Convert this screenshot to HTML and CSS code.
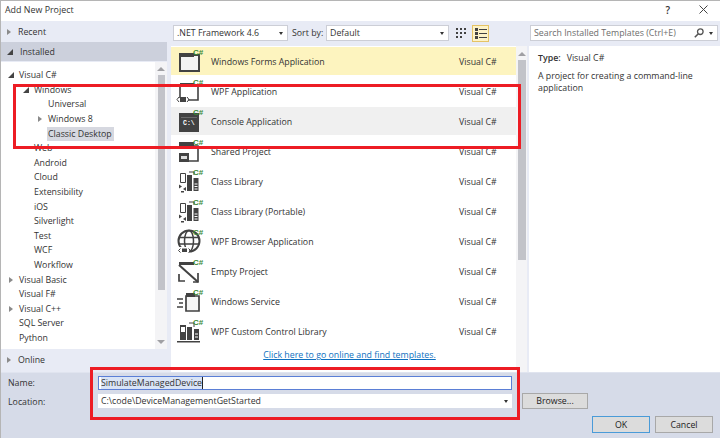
FILE: index.html
```html
<!DOCTYPE html>
<html lang="en">
<head>
    <meta charset="UTF-8">
    <title>Add New Project</title>
    <link rel="stylesheet" href="styles.css">
</head>
<body>
    <svg class="defs" width="0" height="0">
        <symbol id="i-forms" viewBox="0 0 28 24">
            <path d="M4 6h19v16H4z" fill="#f3f3f3" stroke="#424242" stroke-width="2"/>
            <path d="M3 4h15v4H3z" fill="#424242"/>
        </symbol>
        <symbol id="i-wpf" viewBox="0 0 28 24">
            <path d="M4 19V6h18v15H12" fill="none" stroke="#424242" stroke-width="1.6"/>
            <path d="M4 4h14v3H4z" fill="#424242"/>
            <path d="M4 18h6v5H4z" fill="#424242"/>
            <path d="M3 18l-2 2.500 2 2.500M11 18l2 2.500-2 2.500" fill="none" stroke="#424242"/>
        </symbol>
        <symbol id="i-console" viewBox="0 0 28 24">
            <path d="M3 4h20v19H3z" fill="#424242"/>
            <path d="M5 8h16v1H5z" fill="#6a6a6a"/>
        </symbol>
        <symbol id="i-shared" viewBox="0 0 28 24">
            <path d="M9 7h13v15H9" fill="#fff" stroke="#424242" stroke-width="1.600"/>
            <path d="M3 3h15v4H3z" fill="#424242"/>
            <path d="M3 14h10v9H3z" fill="#424242"/>
            <path d="M5 17h6v3H5z" fill="#ddd"/>
        </symbol>
        <symbol id="i-lib" viewBox="0 0 28 24">
            <path d="M4.500 4.500h5v9h-5z" fill="#fff" stroke="#424242"/>
            <path d="M11 6h5v16h-5z" fill="#424242"/>
            <path d="M17.500 9h5v13h-5z" fill="#424242"/>
            <path d="M18.500 15h3M18.500 17.500h3M18.500 20h3" stroke="#fff"/>
            <path d="M13 3h5v3" fill="none" stroke="#424242"/>
            <path d="M3 17h8v5H3z" fill="#fff"/>
            <path d="M3 15.500l3 2-3 2zM10 18l-3 2 3 2zM5 22h3v1.500H5z" fill="#424242"/>
        </symbol>
        <symbol id="i-globe" viewBox="0 0 28 24">
            <circle cx="13" cy="12" r="10.500" fill="none" stroke="#424242" stroke-width="2"/>
            <ellipse cx="13" cy="12" rx="4.500" ry="10.500" fill="none" stroke="#424242" stroke-width="1.500"/>
            <path d="M3 8.500h20M3 15h20" stroke="#424242" stroke-width="1.500"/>
            <path d="M3 18h10v6H3z" fill="#fff"/>
            <path d="M6 19.500h5v3.500H6z" fill="#424242"/>
            <path d="M4.500 19.500l-2 2 2 2M12.500 19.500l2 2-2 2" fill="none" stroke="#424242"/>
        </symbol>
        <symbol id="i-empty" viewBox="0 0 28 24">
            <path d="M3 3h15v3H3z" fill="#424242"/>
            <path d="M3 6l19 17" stroke="#424242" stroke-width="2"/>
            <path d="M3 15v7h6M22 14v9h-5" fill="none" stroke="#424242" stroke-width="1.700"/>
        </symbol>
        <symbol id="i-service" viewBox="0 0 28 24">
            <path d="M10 7h13v15H10z" fill="#f6f6f6" stroke="#424242" stroke-width="1.700"/>
            <path d="M10 4h9v4h-9z" fill="#424242"/>
            <path d="M1 10h6M3 14h4M1 18h6" stroke="#424242" stroke-width="1.300"/>
        </symbol>
        <symbol id="i-custom" viewBox="0 0 28 24">
            <path d="M4 6h6v15H4z" fill="#424242"/>
            <path d="M11 8h5v13h-5zM18 10h5v11h-5z" fill="#424242"/>
            <path d="M13 4h5v4" fill="none" stroke="#424242"/>
            <path d="M5 8h4v5H5z" fill="#fff"/>
            <path d="M1 22h23v1.500H1z" fill="#424242"/>
            <path d="M19 15h3M19 18h3" stroke="#fff"/>
        </symbol>
    </svg>

    <div class="dialog">
        <div class="titlebar">
            <span>Add New Project</span>
            <div class="title-btns">
                <span class="help">?</span>
                <svg width="9" height="9" viewBox="0 0 9 9"><path d="M.5.500l8 8M8.500.500l-8 8" stroke="#444" fill="none"/></svg>
            </div>
        </div>

        <div class="main">
            <div class="side">
                <div class="side-head recent"><i class="arrow open"></i>Recent</div>
                <div class="side-head installed"><i class="arrow down"></i>Installed</div>
                <div class="tree-wrap">
                    <ul class="tree">
                        <li class="lvl1"><i class="arrow down"></i>Visual C#</li>
                        <li class="lvl2"><i class="arrow down"></i>Windows</li>
                        <li class="lvl3">Universal</li>
                        <li class="lvl3"><i class="arrow open"></i>Windows 8</li>
                        <li class="lvl3"><span class="picked">Classic Desktop</span></li>
                        <li class="lvl2">Web</li>
                        <li class="lvl2">Android</li>
                        <li class="lvl2">Cloud</li>
                        <li class="lvl2">Extensibility</li>
                        <li class="lvl2">iOS</li>
                        <li class="lvl2">Silverlight</li>
                        <li class="lvl2">Test</li>
                        <li class="lvl2">WCF</li>
                        <li class="lvl2">Workflow</li>
                        <li class="lvl1"><i class="arrow open"></i>Visual Basic</li>
                        <li class="lvl1">Visual F#</li>
                        <li class="lvl1"><i class="arrow open"></i>Visual C++</li>
                        <li class="lvl1">SQL Server</li>
                        <li class="lvl1">Python</li>
                    </ul>
                    <div class="scroll tree-scroll">
                        <i class="up"></i><b></b><i class="dn"></i>
                    </div>
                </div>
                <div class="side-head online"><i class="arrow open"></i>Online</div>
            </div>

            <div class="center">
                <div class="toolbar">
                    <div class="combo fw">.NET Framework 4.6<i class="caret"></i></div>
                    <span class="sort-label">Sort by:</span>
                    <div class="combo sort">Default<i class="caret"></i></div>
                    <svg class="grid-icon" width="11" height="11" viewBox="0 0 11 11"><path d="M0 0h2v2H0zM4 0h2v2H4zM8 0h2v2H8zM0 4h2v2H0zM4 4h2v2H4zM8 4h2v2H8zM0 8h2v2H0zM4 8h2v2H4z" fill="#424242"/></svg>
                    <div class="list-btn">
                        <svg width="12" height="11" viewBox="0 0 12 11"><path d="M0 0h3v3H0zM0 4h3v3H0zM0 8h3v3H0zM4 1h8v1H4zM4 5h8v1H4zM4 9h8v1H4z" fill="#424242"/></svg>
                    </div>
                    <div class="search">
                        <span>Search Installed Templates (Ctrl+E)</span>
                        <svg width="10" height="10" viewBox="0 0 10 10"><circle cx="6.300" cy="3.700" r="2.800" fill="none" stroke="#555" stroke-width="1.300"/><path d="M4.300 5.700L.8 9.200" stroke="#555" stroke-width="1.600"/></svg>
                        <i class="caret"></i>
                    </div>
                </div>
                <div class="content">
                    <div class="list-col">
                        <div class="list">
                            <div class="row hot"><span class="ico"><svg><use href="#i-forms"/></svg><em>C#</em></span><span class="name">Windows Forms Application</span><span class="lang">Visual C#</span></div>
                            <div class="row"><span class="ico"><svg><use href="#i-wpf"/></svg><em>C#</em></span><span class="name">WPF Application</span><span class="lang">Visual C#</span></div>
                            <div class="row sel"><span class="ico"><svg><use href="#i-console"/></svg><em>C#</em><span class="prompt">C:\</span></span><span class="name">Console Application</span><span class="lang">Visual C#</span></div>
                            <div class="row"><span class="ico"><svg><use href="#i-shared"/></svg><em>C#</em></span><span class="name">Shared Project</span><span class="lang">Visual C#</span></div>
                            <div class="row"><span class="ico"><svg><use href="#i-lib"/></svg><em>C#</em></span><span class="name">Class Library</span><span class="lang">Visual C#</span></div>
                            <div class="row"><span class="ico"><svg><use href="#i-lib"/></svg><em>C#</em></span><span class="name">Class Library (Portable)</span><span class="lang">Visual C#</span></div>
                            <div class="row"><span class="ico"><svg><use href="#i-globe"/></svg><em>C#</em></span><span class="name">WPF Browser Application</span><span class="lang">Visual C#</span></div>
                            <div class="row"><span class="ico"><svg><use href="#i-empty"/></svg><em>C#</em></span><span class="name">Empty Project</span><span class="lang">Visual C#</span></div>
                            <div class="row"><span class="ico"><svg><use href="#i-service"/></svg><em>C#</em></span><span class="name">Windows Service</span><span class="lang">Visual C#</span></div>
                            <div class="row"><span class="ico"><svg><use href="#i-custom"/></svg><em>C#</em></span><span class="name">WPF Custom Control Library</span><span class="lang">Visual C#</span></div>
                        </div>
                        <div class="scroll list-scroll">
                            <i class="up"></i><b></b>
                        </div>
                        <div class="online-link"><a href="#">Click here to go online and find templates.</a></div>
                    </div>
                    <div class="info">
                        <p class="type"><strong>Type:</strong>Visual C#</p>
                        <p>A project for creating a command-line application</p>
                    </div>
                </div>
            </div>
        </div>

        <div class="bottom">
            <div class="field">
                <label>Name:</label>
                <div class="name-input"><span>SimulateManagedDevice</span></div>
            </div>
            <div class="field loc">
                <label>Location:</label>
                <div class="loc-input">C:\code\DeviceManagementGetStarted<i class="caret"></i></div>
                <button class="browse">Browse...</button>
            </div>
            <div class="actions">
                <button class="ok">OK</button>
                <button>Cancel</button>
            </div>
        </div>

        <div class="mark mark-top"></div>
        <div class="mark mark-bottom"></div>
    </div>
</body>
</html>
```

FILE: styles.css
```css
* {
    box-sizing: border-box;
}
body {
    margin: 0;
    background: #fff;
    font-family: "Open Sans", "Noto Sans", sans-serif;
    font-size: 8.8px;
    color: #333;
}
.defs {
    display: block;
    height: 0;
}
.dialog {
    position: relative;
    width: 720px;
    height: 438px;
    border-top: 1px solid #b5b5b5;
    border-left: 1px solid #b5b5b5;
    display: flex;
    flex-direction: column;
    overflow: hidden;
}
.titlebar {
    height: 20px;
    flex: none;
    display: flex;
    justify-content: space-between;
    align-items: center;
    padding: 0 0 3px 4px;
    font-size: 8.9px;
}
.title-btns {
    display: flex;
    align-items: center;
    gap: 29px;
    padding-right: 12px;
}
.help {
    font-weight: 600;
    font-size: 10px;
}

.main {
    height: 351px;
    flex: none;
    display: flex;
    background: #e8ebf5;
}
.side {
    width: 170px;
    flex: none;
    display: flex;
    flex-direction: column;
}
.side-head {
    display: flex;
    align-items: center;
    padding-left: 6px;
    gap: 7px;
}
.side-head .arrow {
    width: 3px;
}
.recent {
    height: 21px;
}
.installed {
    height: 19px;
    width: 166px;
    background: #ccd0dc;
}
.online {
    height: 23px;
    margin-top: auto;
    padding-bottom: 2px;
}

.tree-wrap {
    display: flex;
    width: 166px;
    height: 287px;
    margin-top: 1px;
    background: #fff;
}
.tree {
    list-style: none;
    margin: 0;
    padding: 6.2px 0 0;
    width: 154px;
    flex: none;
}
.tree li {
    height: 14.6px;
    line-height: 14.6px;
    position: relative;
    white-space: nowrap;
}
.lvl1 {
    padding-left: 18px;
}
.lvl2 {
    padding-left: 33px;
}
.lvl3 {
    padding-left: 47px;
}
.tree .arrow {
    position: absolute;
    margin-left: -10px;
    top: 4px;
}
.picked {
    display: inline-block;
    background: #d6d8e0;
    margin-left: -1px;
    padding: 0 2px 0 1px;
}
.arrow {
    display: inline-block;
    width: 0;
    height: 0;
}
.arrow.open {
    border-left: 4px solid #8a8a8a;
    border-top: 3.500px solid transparent;
    border-bottom: 3.500px solid transparent;
}
.arrow.down {
    border-right: 6px solid #444;
    border-top: 6px solid transparent;
}
.tree .arrow.down {
    margin-left: -11px;
}

.scroll {
    flex: none;
    background: #f4f4f6;
    display: flex;
    flex-direction: column;
    align-items: center;
}
.scroll b {
    display: block;
    width: 7px;
    background: #c2c3c9;
}
.scroll .up,
.scroll .dn {
    display: block;
    width: 0;
    height: 0;
    border-left: 4px solid transparent;
    border-right: 4px solid transparent;
}
.scroll .up {
    border-bottom: 4px solid #a0a0a4;
}
.scroll .dn {
    border-top: 4px solid #a0a0a4;
    margin-top: auto;
    margin-bottom: 5px;
}
.tree-scroll {
    width: 12px;
    padding-top: 5px;
}
.tree-scroll b {
    height: 215px;
    margin-top: 4px;
}

.center {
    flex: 1;
    min-width: 0;
    display: flex;
    flex-direction: column;
}
.toolbar {
    height: 25px;
    flex: none;
    display: flex;
    align-items: center;
    padding: 0 2px 1px 2px;
}
.combo {
    height: 16px;
    line-height: 14px;
    background: #fff;
    border: 1px solid #ccced6;
    padding-left: 3px;
    position: relative;
}
.fw {
    width: 115px;
}
.sort {
    width: 123px;
}
.sort-label {
    margin: 0 4px;
    width: 30px;
    white-space: nowrap;
}
.caret {
    position: absolute;
    right: 4px;
    top: 6px;
    width: 0;
    height: 0;
    border-left: 2.500px solid transparent;
    border-right: 2.500px solid transparent;
    border-top: 3px solid #333;
}
.grid-icon {
    margin-left: 7px;
}
.list-btn {
    width: 17px;
    height: 17px;
    margin-left: 5px;
    background: #fdf3c8;
    border: 1px solid #e5c365;
    display: flex;
    align-items: center;
    justify-content: center;
}
.search {
    width: 188px;
    height: 16px;
    margin-left: 41px;
    background: #fff;
    border: 1px solid #ccced6;
    position: relative;
    display: flex;
    align-items: center;
    justify-content: space-between;
    padding: 0 13px 0 3px;
    color: #6d6d6d;
}

.content {
    flex: 1;
    display: flex;
    min-height: 0;
}
.list-col {
    width: 356px;
    flex: none;
    display: grid;
    grid-template-columns: 345px 11px;
    grid-template-rows: 1fr 23px;
    background: #fff;
    margin-right: 2px;
}
.list {
    padding-top: 1px;
    overflow: hidden;
    background: #fff;
}
.row {
    height: 28px;
    margin-bottom: 2px;
    display: flex;
    align-items: center;
    padding-top: 0;
}
.row.hot {
    background: #fdf4bf;
}
.row.sel {
    background: #f0f0f0;
}
.ico {
    width: 28px;
    height: 28px;
    margin-left: 5px;
    flex: none;
    position: relative;
}
.ico svg {
    position: absolute;
    left: 0;
    top: 2px;
    width: 28px;
    height: 24px;
}
.ico em {
    position: absolute;
    left: 16px;
    top: 1px;
    font-family: "Liberation Sans", sans-serif;
    font-style: normal;
    font-weight: bold;
    font-size: 8px;
    line-height: 9px;
    color: #388a34;
    padding: 0 1px;
}
.prompt {
    position: absolute;
    left: 7px;
    top: 12px;
    font-family: "Liberation Mono", monospace;
    font-size: 6.500px;
    line-height: 9px;
    font-weight: bold;
    color: #fff;
}
.name,
.lang {
    padding-top: 2px;
}
.name {
    margin-left: 7px;
    width: 248px;
    flex: none;
}
.list-scroll {
    padding-top: 6px;
    grid-row: 1 / 3;
    grid-column: 2;
    background: #f4f4f6;
}
.list-scroll b {
    height: 200px;
    margin-top: 4px;
    width: 8px;
}
.online-link {
    grid-column: 1;
    grid-row: 2;
    text-align: center;
    padding: 0 0 0 12px;
}
.online-link a {
    color: #0e70c0;
}
.info {
    flex: 1;
    background: #fff;
    padding: 6px 9px;
    line-height: 12px;
}
.info p {
    margin: 0 0 6px;
    width: 165px;
}
.type strong {
    font-weight: 600;
    margin-right: 6px;
}

.bottom {
    flex: 1;
    background: #d6dbe8;
    border-top: 1px solid #e0e4ef;
    padding: 3px 7px 0 7px;
    display: flex;
    flex-direction: column;
}
.field {
    display: flex;
    align-items: center;
    height: 14px;
}
.field.loc {
    height: 16px;
    margin-top: 3px;
}
.field.loc label {
    padding-top: 2px;
}
.field label {
    width: 90px;
    flex: none;
}
.name-input {
    width: 414px;
    height: 14px;
    line-height: 12px;
    background: #fff;
    border: 1px solid #5b7fd6;
    padding-left: 2px;
}
.name-input span {
    background: #d9e4f6;
    border-right: 1px solid #222;
}
.loc-input {
    width: 414px;
    height: 14px;
    line-height: 14px;
    background: #fff;
    padding-left: 3px;
    position: relative;
}
button {
    font: inherit;
    color: #222;
    background: #dcdcdc;
    border: 1px solid #a8a8a8;
    padding: 0;
    height: 17px;
    width: 58px;
}
.browse {
    width: 66px;
    height: 16px;
    margin-left: 10px;
}
.actions {
    display: flex;
    justify-content: flex-end;
    gap: 5px;
    margin-top: 7px;
}
.ok {
    border-color: #4a9bd8;
}

/* red annotation boxes drawn over the dialog */
.mark {
    position: absolute;
    border: 3px solid #ed1c24;
}
.mark-top {
    left: 12px;
    top: 83px;
    width: 508px;
    height: 65px;
}
.mark-bottom {
    left: 89px;
    top: 366px;
    width: 430px;
    height: 53px;
}
```
